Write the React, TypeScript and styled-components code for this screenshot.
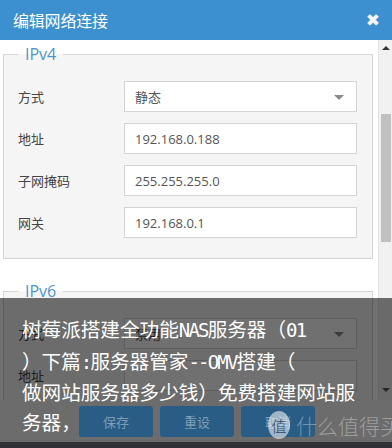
import React from "react";
import styled, { createGlobalStyle } from "styled-components";

const GlobalStyle = createGlobalStyle`
  html, body { margin:0; padding:0; background:#fff; }
  body { font-family: "Open Sans", "Noto Sans CJK SC", sans-serif; }
`;

const Page = styled.div`
  position: relative;
  width: 392px;
  height: 448px;
  overflow: hidden;
  background: #fff;
  display: flex;
  flex-direction: column;
`;

const Header = styled.div`
  height: 40px;
  flex: none;
  background: #3d90cf;
  display: flex;
  align-items: center;
  justify-content: space-between;
  padding: 0 12px 0 13px;
  color: #fff;
`;

const Title = styled.div`
  font-family: "Noto Sans CJK SC", sans-serif;
  font-size: 16px;
  letter-spacing: -0.2px;
`;

const Close = styled.div`
  font-family: "DejaVu Sans", sans-serif;
  font-weight: bold;
  font-size: 17px;
  color: #f4f4f4;
`;

const Body = styled.div`
  height: 360px;
  flex: none;
  display: flex;
  overflow: hidden;
`;

const Content = styled.div`
  width: 378px;
  flex: none;
  padding: 3px 5px 0 3px;
  box-sizing: border-box;
`;

const Field = styled.fieldset<{ $gap?: number }>`
  margin: ${(p) => p.$gap || 0}px 0 0 0;
  padding: 16px 15px 20px 14px;
  border: 1px solid #d6d6d6;
  background: #f5f5f5;
  display: flex;
  flex-direction: column;
  gap: 11px;
`;

const Legend = styled.legend`
  margin-left: 0;
  padding: 0 7px;
  font-size: 16px;
  line-height: 22px;
  color: #4f95cc;
`;

const Row = styled.div`
  display: flex;
  align-items: center;
`;

const Label = styled.div`
  width: 106px;
  flex: none;
  font-family: "Noto Sans CJK SC", sans-serif;
  font-size: 13px;
  color: #444;
`;

const Input = styled.div`
  position: relative;
  width: 233px;
  height: 31px;
  box-sizing: border-box;
  border: 1px solid #d4d4d4;
  background: #fff;
  padding-left: 10px;
  display: flex;
  align-items: center;
  font-size: 13px;
  color: #555;
`;

const Caret = styled.span`
  position: absolute;
  right: 12px;
  top: 13px;
  width: 0;
  height: 0;
  border-left: 5px solid transparent;
  border-right: 5px solid transparent;
  border-top: 5px solid #8a8a8a;
`;

const Scrollbar = styled.div`
  width: 14px;
  flex: none;
  background: #f1f1f1;
  border-left: 1px solid #e4e4e4;
  box-sizing: border-box;
  display: flex;
  flex-direction: column;
  align-items: center;
`;

const Arrow = styled.span<{ $down?: boolean }>`
  margin: ${(p) => (p.$down ? "auto 0 8px" : "6px 0 0")};
  width: 0;
  height: 0;
  border-left: 4px solid transparent;
  border-right: 4px solid transparent;
  ${(p) => (p.$down ? "border-top: 4px solid #555;" : "border-bottom: 4px solid #333;")}
`;

const Thumb = styled.div`
  width: 10px;
  height: 128px;
  margin-top: 64px;
  background: #c1c1c1;
`;

const Footer = styled.div`
  height: 42px;
  flex: none;
  background: #6c6c6c;
  display: flex;
  align-items: center;
  gap: 7px;
  padding-left: 79px;
`;

const Button = styled.div`
  width: 74px;
  height: 31px;
  border-radius: 3px;
  background: #2a5d85;
  color: #7e9cb6;
  font-family: "Noto Sans CJK SC", sans-serif;
  font-size: 13px;
  display: flex;
  align-items: center;
  justify-content: center;
`;

const Strip = styled.div`
  flex: 1;
  background: #2f3236;
`;

const Caption = styled.div`
  position: absolute;
  left: 0;
  right: 0;
  top: 298px;
  height: 144px;
  padding: 16px 0 0 22px;
  box-sizing: border-box;
  background: linear-gradient(rgba(0, 0, 0, 0.56) 0 102px, transparent 102px);
  color: #fff;
  font-family: "Noto Sans CJK SC", sans-serif;
  font-size: 19.6px;
  line-height: 29.5px;
  white-space: nowrap;
`;

const Narrow = styled.span`
  font-family: "DejaVu Sans Mono", monospace;
  font-size: 19px;
  letter-spacing: -1.8px;
`;

const Mark = styled.div`
  position: absolute;
  left: 268px;
  top: 410px;
  display: flex;
  align-items: center;
  gap: 6px;
  font-family: "Noto Sans CJK SC", sans-serif;
  font-weight: 300;
  color: rgba(255, 255, 255, 0.35);
  font-size: 21px;
  white-space: nowrap;
`;

const MarkBadge = styled.span`
  width: 22px;
  height: 28px;
  border-radius: 50%;
  background: rgba(255, 255, 255, 0.55);
  color: #2f4a66;
  font-size: 15px;
  display: flex;
  align-items: center;
  justify-content: center;
`;

const ipv4 = [
  { label: "地址", value: "192.168.0.188" },
  { label: "子网掩码", value: "255.255.255.0" },
  { label: "网关", value: "192.168.0.1" },
];

export default function App() {
  return (
    <Page>
      <GlobalStyle />
      <Header>
        <Title>编辑网络连接</Title>
        <Close>✖</Close>
      </Header>
      <Body>
        <Content>
          <Field>
            <Legend>IPv4</Legend>
            <Row>
              <Label>方式</Label>
              <Input>
                静态
                <Caret />
              </Input>
            </Row>
            {ipv4.map((r) => (
              <Row key={r.label}>
                <Label>{r.label}</Label>
                <Input>{r.value}</Input>
              </Row>
            ))}
          </Field>
          <Field $gap={21}>
            <Legend>IPv6</Legend>
            <Row>
              <Label>方式</Label>
              <Input>
                禁用
                <Caret />
              </Input>
            </Row>
            <Row>
              <Label>地址</Label>
              <Input />
            </Row>
          </Field>
        </Content>
        <Scrollbar>
          <Arrow />
          <Thumb />
          <Arrow $down />
        </Scrollbar>
      </Body>
      <Footer>
        <Button>保存</Button>
        <Button>重设</Button>
        <Button>取消</Button>
      </Footer>
      <Strip />
      <Caption>
        <div>
          树莓派搭建全功能<Narrow>NAS</Narrow>服务器（<Narrow>01</Narrow>
        </div>
        <div>
          ）下篇<Narrow>:</Narrow>服务器管家<Narrow>--OMV</Narrow>搭建（
        </div>
        <div>做网站服务器多少钱）免费搭建网站服</div>
        <div>务器，</div>
      </Caption>
      <Mark>
        <MarkBadge>值</MarkBadge>
        什么值得买
      </Mark>
    </Page>
  );
}
